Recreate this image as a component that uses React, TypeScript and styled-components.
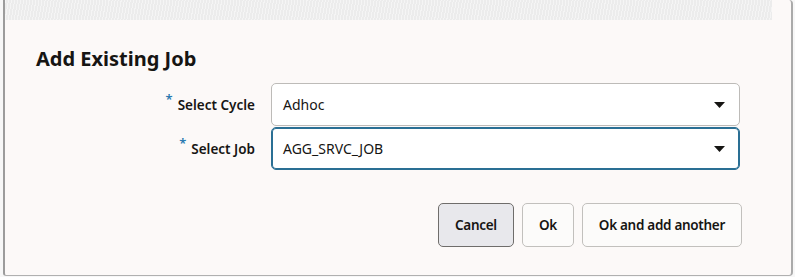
import React from 'react';
import styled, { createGlobalStyle } from 'styled-components';

const GlobalStyle = createGlobalStyle`
  html, body {
    margin: 0;
    padding: 0;
    background: #f7f7f7;
  }
  body {
    font-family: 'Noto Sans', 'Open Sans', sans-serif;
    color: #161513;
  }
`;

// Types
interface FieldProps {
  label: string;
  value: string;
  focused?: boolean;
}

const Dialog = styled.div`
  box-sizing: border-box;
  margin-left: 3px;
  width: 790px;
  height: 276px;
  background: #fcf9f8;
  border-left: 2px solid #9c9c9c;
  border-right: 2px solid #aaaaaa;
  border-bottom: 1px solid #b0b0b0;
  border-radius: 0 4px 4px 3px;
  display: flex;
  flex-direction: column;
`;

const Backdrop = styled.div`
  width: 767px;
  height: 20px;
  background-color: #ececec;
  background-image: repeating-linear-gradient(
    100deg,
    rgba(255, 255, 255, 0.45) 0 1px,
    transparent 1px 3px
  );
`;

const Title = styled.h1`
  margin: 26px 0 0 31px;
  font-size: 20px;
  line-height: 25px;
  font-weight: 700;
`;

const Form = styled.div`
  margin: 12px 0 0 0;
  display: grid;
  grid-template-columns: 250px 469px;
  column-gap: 16px;
  row-gap: 1px;
  align-items: center;
`;

const Label = styled.label`
  justify-self: end;
  display: flex;
  align-items: flex-start;
  gap: 5px;
  font-size: 13.5px;
  font-weight: 600;
`;

const Required = styled.span`
  color: #2a7ab0;
  font-size: 13px;
  line-height: 1;
  margin-top: -3px;
`;

const SelectBox = styled.div<{ $focused?: boolean }>`
  box-sizing: border-box;
  height: 43px;
  display: flex;
  align-items: center;
  justify-content: space-between;
  padding: 0 14px 0 11px;
  background: #ffffff;
  border: 1px solid ${({ $focused }) => ($focused ? '#2a6f94' : '#bdbbb8')};
  box-shadow: ${({ $focused }) => ($focused ? 'inset 0 0 0 1px #2a6f94' : 'none')};
  border-radius: 5px;
  font-size: 14px;
`;

const Footer = styled.div`
  margin: 33px 49px 0 0;
  display: flex;
  justify-content: flex-end;
  gap: 8px;
`;

const Button = styled.button<{ $primary?: boolean }>`
  box-sizing: border-box;
  height: 44px;
  padding: 0 16px;
  font-family: inherit;
  font-size: 13.5px;
  font-weight: 600;
  letter-spacing: -0.3px;
  color: #161513;
  background: ${({ $primary }) => ($primary ? '#e8e8ec' : '#fcfbfa')};
  border: 1px solid ${({ $primary }) => ($primary ? '#6f6d6b' : '#c2c0bd')};
  border-radius: 5px;
`;

const Chevron = () => (
  <svg width="11" height="6" viewBox="0 0 11 6">
    <path d="M0 0 H11 L5.5 6 Z" fill="#161513" />
  </svg>
);

const Field = ({ label, value, focused }: FieldProps) => (
  <>
    <Label>
      <Required>*</Required>
      {label}
    </Label>
    <SelectBox $focused={focused}>
      <span>{value}</span>
      <Chevron />
    </SelectBox>
  </>
);

export default function App() {
  return (
    <>
      <GlobalStyle />
      <Dialog>
        <Backdrop />
        <Title>Add Existing Job</Title>
        <Form>
          <Field label="Select Cycle" value="Adhoc" />
          <Field label="Select Job" value="AGG_SRVC_JOB" focused />
        </Form>
        <Footer>
          <Button $primary>Cancel</Button>
          <Button>Ok</Button>
          <Button>Ok and add another</Button>
        </Footer>
      </Dialog>
    </>
  );
}
